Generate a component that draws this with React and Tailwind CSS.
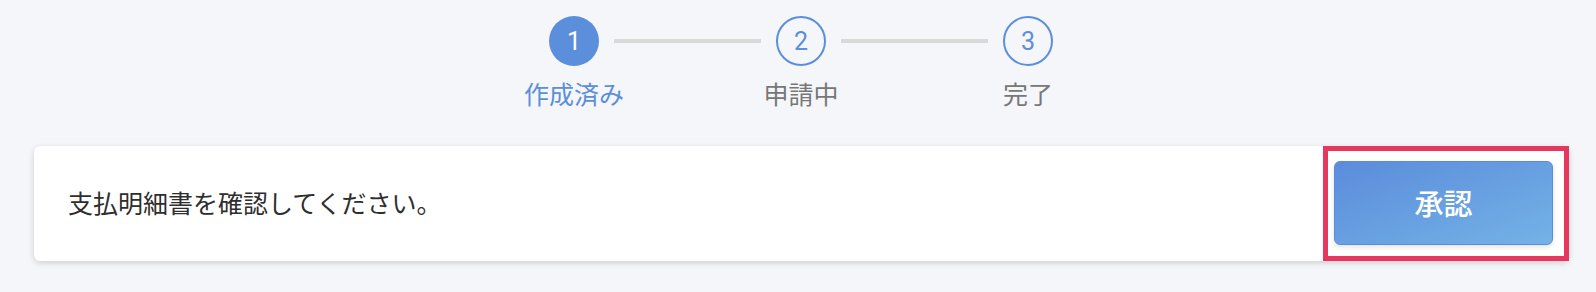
import React from "react";

const FONT = { fontFamily: '"Noto Sans CJK JP", "Noto Sans", sans-serif' };
const DIGIT = { fontFamily: 'Roboto, "Noto Sans", sans-serif' };

const steps = [
  { no: 1, label: "作成済み", done: true },
  { no: 2, label: "申請中", done: false },
  { no: 3, label: "完了", done: false },
];

function StepDot({ step }) {
  return (
    <div className="flex w-[50px] flex-col items-center">
      {step.done ? (
        <div
          className="flex h-[50px] w-[50px] items-center justify-center rounded-full bg-[#5b8edb] text-[25px] leading-none text-white"
          style={DIGIT}
        >
          {step.no}
        </div>
      ) : (
        <div
          className="flex h-[50px] w-[50px] items-center justify-center rounded-full border-2 border-[#5b8edb] text-[25px] leading-none text-[#5b8edb]"
          style={DIGIT}
        >
          {step.no}
        </div>
      )}
      <div
        className={
          "mt-[9px] whitespace-nowrap text-[25px] leading-[1.5] " +
          (step.done ? "text-[#5b8edb]" : "text-[#777777]")
        }
      >
        {step.label}
      </div>
    </div>
  );
}

function Stepper() {
  return (
    <div className="flex items-start justify-center pl-[6px] pt-[16px]">
      {steps.map((step, i) => (
        <React.Fragment key={step.no}>
          {i > 0 ? <div className="mx-[15px] mt-[23px] h-[4px] w-[147px] bg-[#d9d9d9]" /> : null}
          <StepDot step={step} />
        </React.Fragment>
      ))}
    </div>
  );
}

export default function App() {
  return (
    <div className="h-[292px] w-full bg-[#f5f6fa]" style={FONT}>
      <Stepper />

      <div className="ml-[34px] mr-[27px] mt-[33px] flex h-[115px] items-center rounded-md bg-white shadow-[0_2px_6px_rgba(0,0,0,0.16)]">
        <div className="flex-1 pl-[34px] text-[25px] text-[#2e2e2e]">
          支払明細書を確認してください。
        </div>
        <div className="flex h-full w-[246px] items-center border-[5px] border-[#e8375f] pl-[6px] pr-[11px]">
          <button
            type="button"
            className="flex h-[84px] w-full items-center justify-center rounded-md border border-[#5a8bdc] bg-gradient-to-br from-[#5b8cdb] to-[#74b2e6] text-[29px] font-medium text-white shadow-[0_2px_5px_rgba(0,0,0,0.12)]"
          >
            承認
          </button>
        </div>
      </div>
    </div>
  );
}
